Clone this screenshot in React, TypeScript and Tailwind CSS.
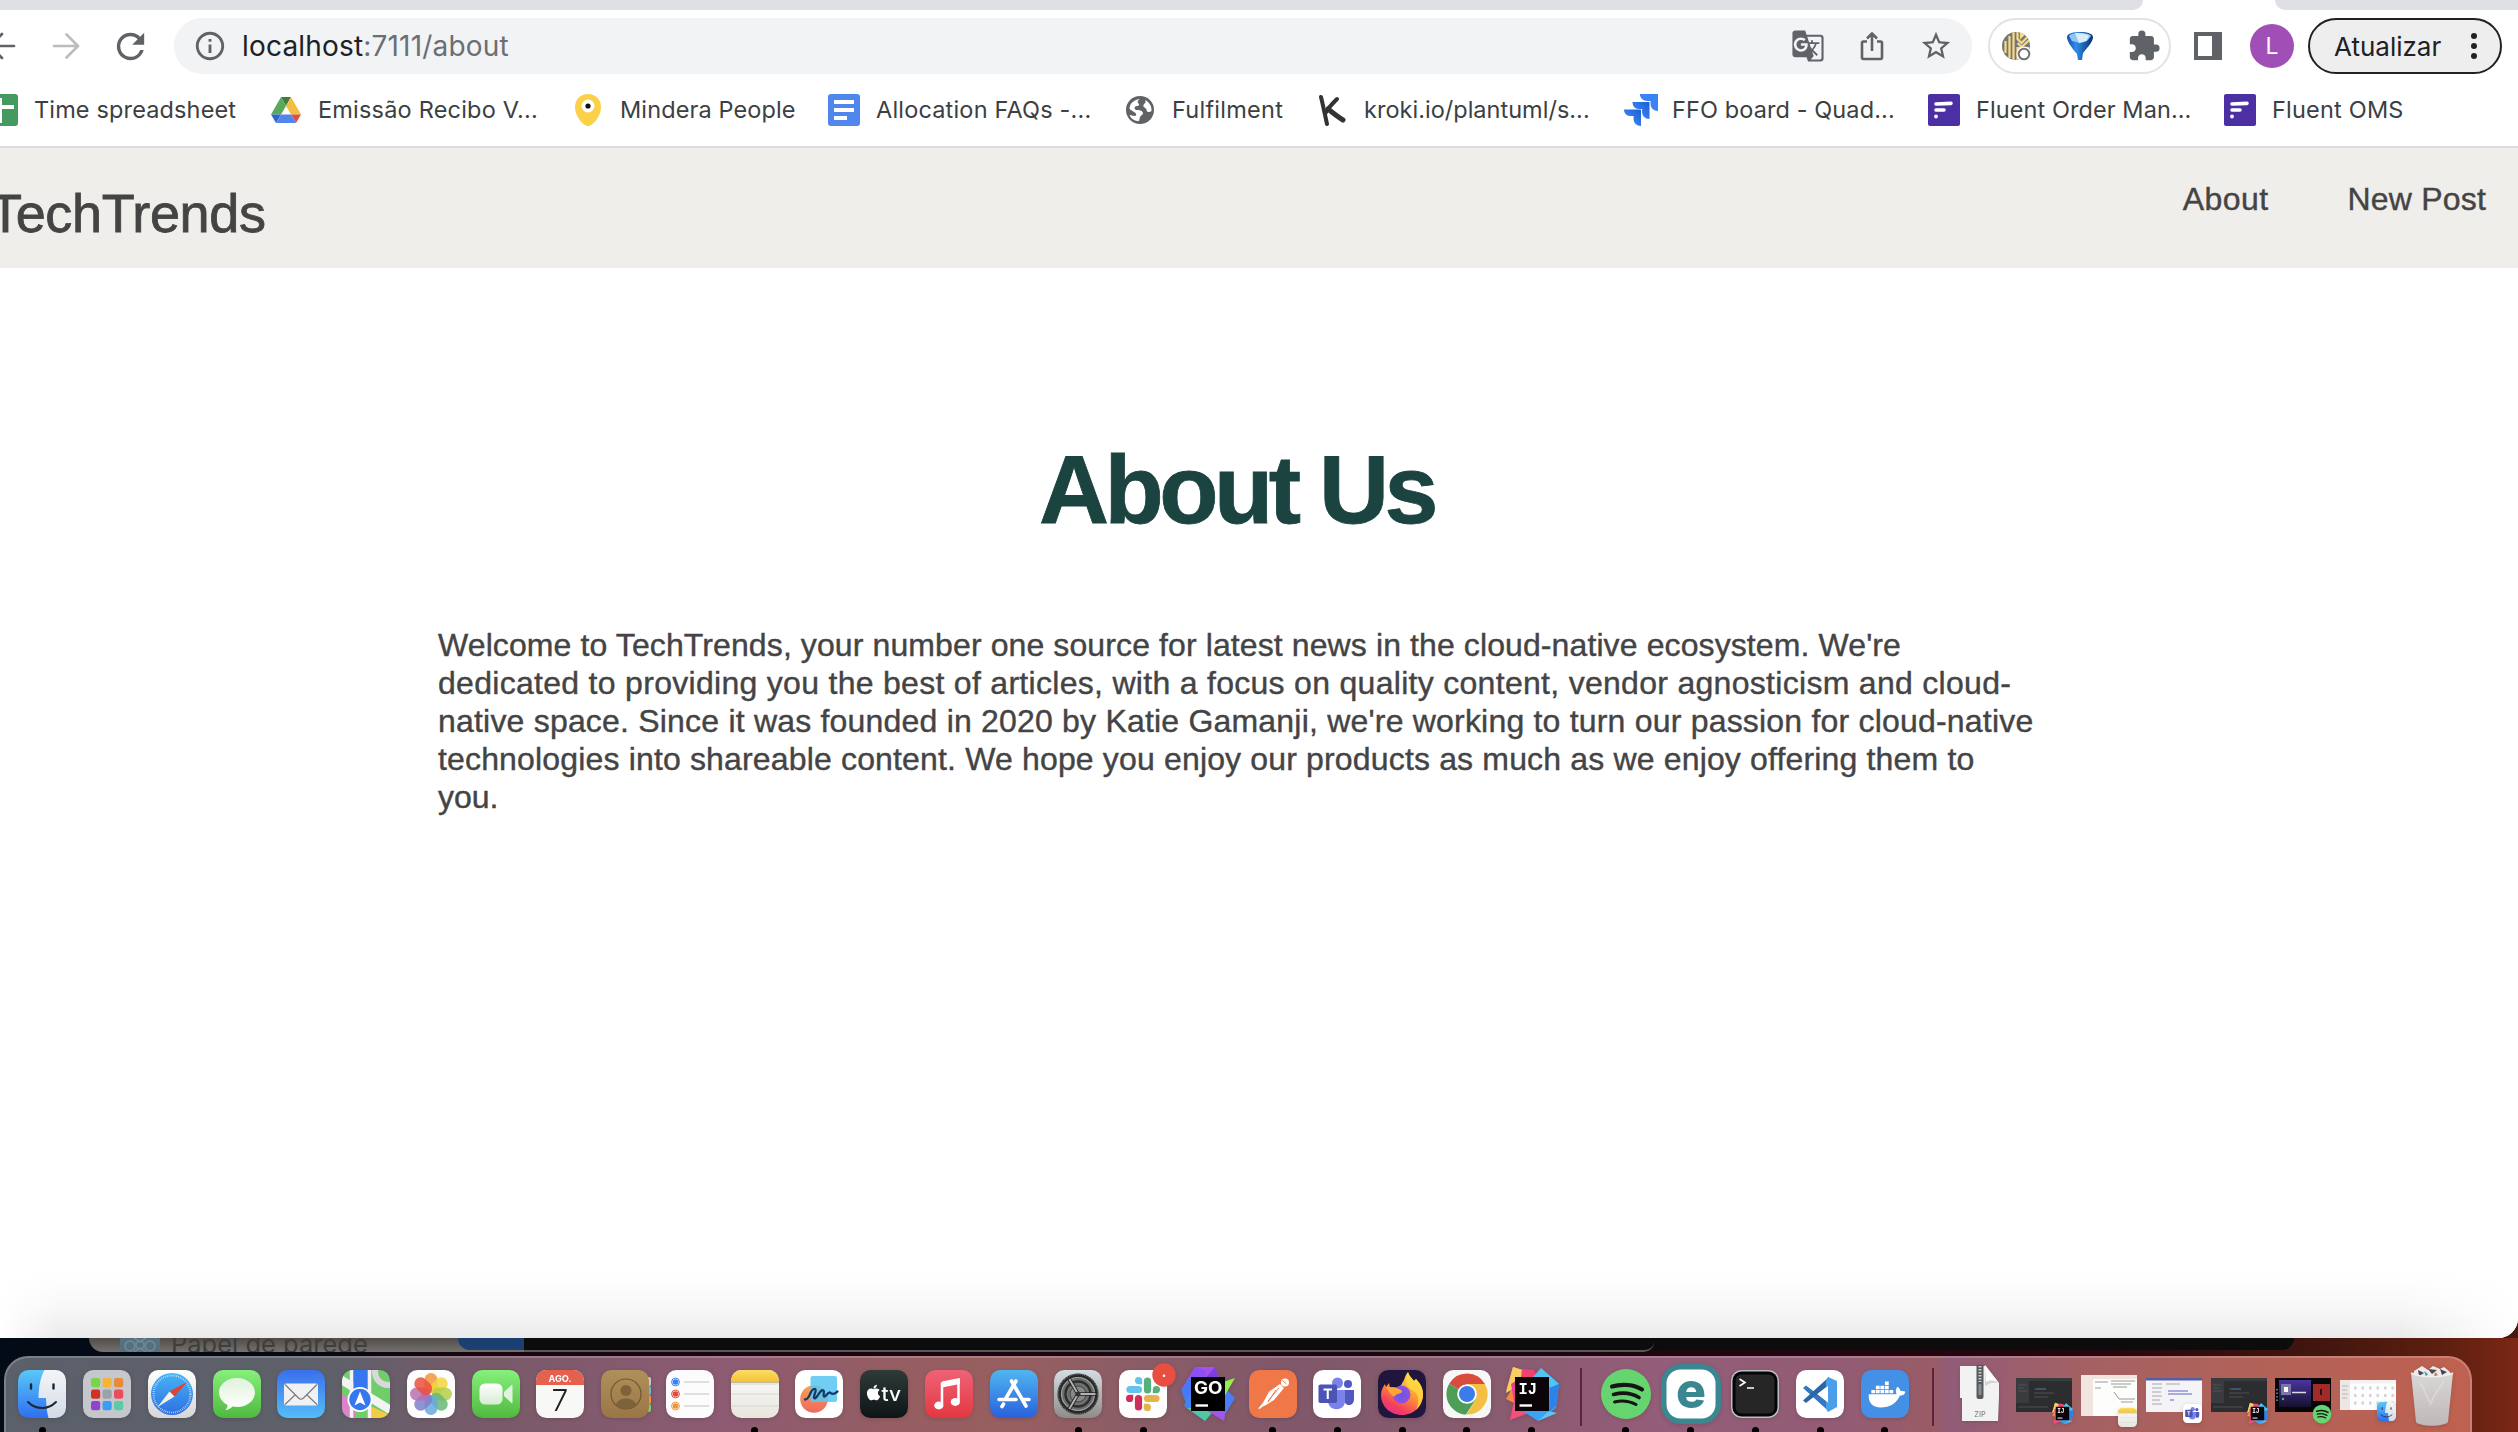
import type { ReactNode } from "react";
import { MdExtension, MdGTranslate, MdInfoOutline, MdRefresh, MdStarBorder } from "react-icons/md";
import { FaApple, FaDocker } from "react-icons/fa";

/* ---------- Toolbar icons ---------- */

const Arrow = ({ className, flip }: { className: string; flip?: boolean }) => (
  <svg viewBox="0 0 28 28" className={className} fill="none" stroke="currentColor" strokeWidth="2.7" strokeLinecap="round">
    <path d={flip ? "M26 14H2M14 2L2 14l12 12" : "M2 14h24M14.500 2.500L26 14 14.500 25.500"} />
  </svg>
);

const Share = () => (
  <svg viewBox="0 0 34 34" className="size-[34px]" fill="none" stroke="#5f6368" strokeWidth="2.6" strokeLinejoin="round">
    <path d="M12 12.500H8.500a1.500 1.500 0 0 0-1.500 1.500v14.500a1.500 1.500 0 0 0 1.500 1.500h17a1.500 1.500 0 0 0 1.500-1.500V14a1.500 1.500 0 0 0-1.500-1.500H22M17 22V5M12 9.500l5-5 5 5" />
  </svg>
);

const Stripes = () => (
  <svg viewBox="0 0 34 34" className="size-[34px]">
    <defs>
      <clipPath id="stripeClip"><circle cx="17" cy="17" r="14" /></clipPath>
    </defs>
    <circle cx="17" cy="17" r="14" fill="#76767a" />
    <g clipPath="url(#stripeClip)" stroke="#f8dc83" strokeWidth="2.200" fill="none">
      <path d="M6.500 12v12M10.500 7v22M14.500 3v28M18.500 2v8l4 4 9-9M18.500 14l4 4 9-8M18.500 31V19h12M22 4v4l6-6" />
    </g>
    <circle cx="25" cy="25" r="7.500" fill="#fff" />
    <circle cx="25" cy="25" r="5.300" fill="#fff" stroke="#707478" strokeWidth="2" />
  </svg>
);

const Funnel = () => (
  <svg viewBox="0 0 34 34" className="size-[34px]">
    <defs>
      <linearGradient id="funnelG" x1="0" x2="1"><stop stopColor="#0f4da6" /><stop offset=".35" stopColor="#2f8deb" /><stop offset="1" stopColor="#082f6b" /></linearGradient>
    </defs>
    <path d="M4 8c0-3 5-5 13-5s13 2 13 5c0 4-4 9-10 16l-1 7h-4l-1-6C8 18 4 12 4 8z" fill="url(#funnelG)" />
    <path d="M6 7c1-2 5-3 11-3s10 1 11 3l-4 5-7 2-8-2z" fill="#8cc5f7" />
    <path d="M12 4l4 10 7-2 3-5c-2-2-7-3-14-3z" fill="#d9edfc" />
  </svg>
);

/* ---------- Bookmark icons ---------- */

const Sheet = () => (
  <svg viewBox="0 0 32 32" className="size-8"><rect width="32" height="32" rx="3" fill="#459b5f" /><path d="M6 13h22M14 4v25" stroke="#fff" strokeWidth="4" /></svg>
);
const Drive = () => (
  <svg viewBox="0 0 32 32" className="size-8">
    <path d="M11 3h10l-5 9z" fill="#3c7d40" />
    <path d="M11 3L1 20.500h10L16 12z" fill="#5aa85c" />
    <path d="M21 3l10 17.500H21L16 12z" fill="#f2bd42" />
    <path d="M1 20.500h10L6 29z" fill="#2f66c9" />
    <path d="M31 20.500H21l5 8.500z" fill="#dc5040" />
    <path d="M11 20.500h10l5 8.500H6z" fill="#5087ec" />
  </svg>
);
const Pin = () => (
  <svg viewBox="0 0 32 32" className="size-8">
    <path d="M16 0c7.500 0 13 5.500 13 13 0 9-8 19-13 19S3 22 3 13C3 5.500 8.500 0 16 0z" fill="#fbd149" />
    <circle cx="16" cy="12" r="6.500" fill="#fff" /><circle cx="16" cy="12" r="2.600" fill="#111" />
  </svg>
);
const Docs = () => (
  <svg viewBox="0 0 32 32" className="size-8"><rect width="32" height="32" rx="3" fill="#5087ec" /><path d="M6 8h20M6 16h20M6 24h13" stroke="#fff" strokeWidth="4" /></svg>
);
const Globe = () => (
  <svg viewBox="0 0 32 32" className="size-8">
    <circle cx="16" cy="16" r="14" fill="#5f6368" />
    <path d="M18 5c-3 0-5 2-4 4 2 1 1 3-1 3-3 0-3 3-1 4 3 0 6 0 7 3 0 2-2 2-3 4l-1 4c-4 0-8-2-9.500-6l5 1c2 0 2-2 1-3l-6-4C5.500 9 11 4.500 18 5z" fill="#fff" />
    <path d="M21 6c4 2 7 6 6.500 11-2 2-5 1-5-1 0-3-4-2-3-5 1-2 3-2 1.500-5z" fill="#fff" />
  </svg>
);
const Kroki = () => (
  <svg viewBox="0 0 32 32" className="size-8" fill="none" stroke="#333" strokeLinecap="round">
    <path d="M5 3c2 8 4 18 6 27" strokeWidth="4" /><path d="M21 5C17 9 12 14 9.500 19" strokeWidth="4" /><path d="M12 15c5 4 10 8 15 11" strokeWidth="5" />
  </svg>
);
const Jira = () => (
  <svg viewBox="0 0 32 32" className="h-8 w-[34px]" preserveAspectRatio="none">
    <defs><linearGradient id="jiraG" x1="1" x2="0" y1="0" y2="1"><stop stopColor="#1b5fd0" /><stop offset=".7" stopColor="#3b82f6" /></linearGradient></defs>
    <path d="M15 0h17v17c-4 0-7-3-7-7V7h-3c-4 0-7-3-7-7z" fill="#3b82f6" />
    <path d="M8 8h16v17c-4 0-7-3-7-7v-3h-3c-4 0-6-3-6-7z" fill="url(#jiraG)" />
    <path d="M0 15.500h16V32c-4 0-7-3-7-7v-3H6c-4 0-6-3-6-6.500z" fill="url(#jiraG)" />
  </svg>
);
const Fluent = () => (
  <svg viewBox="0 0 32 32" className="size-8"><rect width="32" height="32" rx="2" fill="#4c2fa3" /><path d="M8 10l15-.6M8 16h8" stroke="#fff" strokeWidth="3.600" strokeLinecap="round" /><circle cx="8" cy="22.500" r="1.900" fill="#fff" /></svg>
);

/* ---------- Dock icons, each on a 48 unit tile ---------- */

const Tile = ({ children, className = "" }: { children?: ReactNode; className?: string }) => (
  <svg viewBox="0 0 48 48" className={`size-12 overflow-visible drop-shadow-sm ${className}`}>{children}</svg>
);
const Grad = ({ id, a, b }: { id: string; a: string; b: string }) => (
  <defs><linearGradient id={id} x1="0" x2="0" y1="0" y2="1"><stop stopColor={a} /><stop offset="1" stopColor={b} /></linearGradient></defs>
);
const Base = ({ fill }: { fill: string }) => <rect width="48" height="48" rx="10.500" fill={fill} />;

const Finder = ({ className }: { className?: string }) => (
  <Tile className={className}>
    <Grad id="fi1" a="#5ac8f7" b="#2f6ff0" /><Grad id="fi2" a="#f4f5f7" b="#d3dbe8" />
    <Base fill="url(#fi1)" />
    <path d="M26.500 0H37.500A10.500 10.500 0 0 1 48 10.500v27A10.500 10.500 0 0 1 37.500 48H30.500c-1.500-6-2.300-12-2.500-20h-7.500C20.500 17 22.500 7 26.500 0z" fill="url(#fi2)" />
    <path d="M13 14.500v4M35.500 14.500v4" stroke="#1d2733" strokeWidth="2.400" strokeLinecap="round" />
    <path d="M10 32c8 8 20 8 28 0" stroke="#1d2733" strokeWidth="2" fill="none" strokeLinecap="round" />
  </Tile>
);
const PADS = ["#77d648", "#f3b437", "#e98b35", "#cf3125", "#9aa2a6", "#ec4b5a", "#8f43cf", "#3b9cf5", "#5bcba3"];
const Launchpad = () => (
  <Tile><Base fill="#c6c7cc" />{PADS.map((c, i) => <rect key={c} x={8 + (i % 3) * 11.500} y={8 + Math.floor(i / 3) * 11.500} width="9.200" height="9.200" rx="2.300" fill={c} />)}</Tile>
);
const Safari = () => (
  <Tile><Grad id="sa1" a="#fff" b="#d6d6d8" /><Grad id="sa2" a="#45b4f5" b="#2f6fe0" /><Base fill="url(#sa1)" />
    <circle cx="24" cy="24" r="21" fill="url(#sa2)" /><circle cx="24" cy="24" r="18.500" fill="none" stroke="#cfe6fb" strokeWidth="2" strokeDasharray=".7 1.236" />
    <path d="M39 12L21.500 21.500l5 5z" fill="#e5412f" /><path d="M9.500 37l12-15.500 5 5z" fill="#f1f1f1" /></Tile>
);
const Messages = () => (
  <Tile><Grad id="me1" a="#86f07c" b="#4fb93f" /><Grad id="me2" a="#e0f3dc" b="#fff" /><Base fill="url(#me1)" />
    <path d="M24 8c10 0 18 6.300 18 14.500S34 37 24 37c-1.600 0-3.200-.2-4.600-.5C17.500 38.500 15 40 12.500 40c1.400-1.500 2-3 2.100-5C9.500 32.300 6 27.700 6 22.500 6 14.300 14 8 24 8z" fill="url(#me2)" /></Tile>
);
const Mail = () => (
  <Tile><Grad id="ma1" a="#3a6fec" b="#55bdf8" /><Base fill="url(#ma1)" /><rect x="7" y="13.500" width="34" height="22" rx="2" fill="#f1f1f2" />
    <path d="M8 14.500l13.500 13.500c1.500 1.500 3.500 1.500 5 0L40 14.500M8 34.500l10.500-10M40 34.500L29.500 24.500" fill="none" stroke="#77797d" strokeWidth="1.100" /></Tile>
);
const Maps = () => (
  <Tile><defs><clipPath id="mpC"><rect width="48" height="48" rx="10.500" /></clipPath></defs>
    <g clipPath="url(#mpC)"><path fill="#6fce6a" d="M0 0h48v48H0z" /><path d="M0 24l14 10v14H0z" fill="#dd83c8" /><path d="M26 48l2-12 20 9v3z" fill="#f5ca45" />
      <circle cx="46" cy="2" r="13" fill="none" stroke="#d9d9dc" strokeWidth="6" />
      <path d="M-2 9l52 32" stroke="#f3f3f3" strokeWidth="8.500" /><path d="M9.500 0v48M27.500 0v48" stroke="#f3f3f3" strokeWidth="3.500" /><path d="M11.500 0h14v26h-14z" fill="#3577ee" /></g>
    <circle cx="18" cy="29.500" r="12.500" fill="#fff" /><circle cx="18" cy="29.500" r="10.700" fill="#3577ee" /><path d="M18 21.500l5.500 14-5.500-3-5.500 3z" fill="#fff" /></Tile>
);
const PETALS = ["#f2953a", "#f0d63c", "#b5cf49", "#67b878", "#67a9de", "#7d80c9", "#b86fb4", "#e8503c"];
const Photos = () => (
  <Tile><Base fill="#fdfdfd" />{PETALS.map((c, i) => <rect key={c} x="17.500" y="3" width="13" height="20" rx="6.500" fill={c} opacity=".85" transform={`rotate(${i * 45} 24 24)`} />)}</Tile>
);
const FaceTime = () => (
  <Tile><Grad id="ft1" a="#86f07c" b="#4fb93f" /><Grad id="ft2" a="#fff" b="#d5ecd1" /><Base fill="url(#ft1)" /><rect x="7.500" y="13.500" width="23" height="21" rx="5.500" fill="url(#ft2)" /><path d="M32 22l7.500-7q1-.8 1 .5v17q0 1.300-1 .5L32 26z" fill="#e1f2de" /></Tile>
);
const Calendar = () => (
  <Tile><Base fill="#f8f8f6" /><path d="M0 15v-4.500A10.500 10.500 0 0 1 10.500 0h27A10.500 10.500 0 0 1 48 10.500V15z" fill="#e4604f" />
    <text x="24" y="11.800" textAnchor="middle" fontSize="9.200" fontWeight="700" fill="#fff" fontFamily="Inter, sans-serif">AGO.</text>
    <text x="24" y="41" textAnchor="middle" fontSize="30" fontWeight="300" fill="#222" fontFamily="Inter, sans-serif">7</text></Tile>
);
const Contacts = () => (
  <Tile><Grad id="co1" a="#b0905a" b="#9b7645" /><rect x="40" y="7" width="10" height="9" rx="2" fill="#c9c9c9" /><rect x="40" y="16" width="10" height="9" rx="2" fill="#6bb7e3" /><rect x="40" y="25" width="10" height="9" rx="2" fill="#e79637" /><rect x="40" y="34" width="10" height="8" rx="2" fill="#77cf69" />
    <Base fill="url(#co1)" /><circle cx="25" cy="24" r="15" fill="none" stroke="#6f5634" strokeWidth="1.200" /><circle cx="25" cy="20.500" r="5.500" fill="#7d623b" /><path d="M14.500 34.500C17 30 21 28.500 25 28.500s8 1.500 10.500 6C33 37.500 29 39 25 39s-8-1.500-10.500-4.500z" fill="#7d623b" /></Tile>
);
const Reminders = () => (
  <Tile><Base fill="#fcfcfc" />{["#3a7ef3", "#e2493a", "#eb9638"].map((c, i) => (
    <g key={c}><circle cx="9.500" cy={12 + i * 12} r="3.900" fill="#fff" stroke={c} strokeWidth="1" /><circle cx="9.500" cy={12 + i * 12} r="2.800" fill={c} /><path d={`M18 ${12 + i * 12}h25`} stroke="#cfcfcf" strokeWidth="1.300" /></g>
  ))}</Tile>
);
const Notes = ({ className }: { className?: string }) => (
  <Tile className={className}><Grad id="no1" a="#fdfdfc" b="#e7e5dd" /><Grad id="no2" a="#fbdc62" b="#f5c334" /><Base fill="url(#no1)" /><path d="M0 12v-1.500A10.500 10.500 0 0 1 10.500 0h27A10.500 10.500 0 0 1 48 10.500V12z" fill="url(#no2)" /><path d="M0 12.700h48" stroke="#b5aa84" strokeWidth="1" /><path d="M1 14.500h46" stroke="#c9c9c5" strokeWidth=".8" strokeDasharray=".8 .8" /><path d="M0 24h48M0 36h48" stroke="#d3d2cc" strokeWidth=".8" /></Tile>
);
const Freeform = () => (
  <Tile><Grad id="fr1" a="#f7a34f" b="#ee6862" /><Base fill="#fff" /><circle cx="19" cy="29" r="13.800" fill="url(#fr1)" /><rect x="15.500" y="6" width="26.500" height="26" rx="2" fill="#5cc6f2" opacity=".88" />
    <path d="M10 29.500c3 0 4-3 5.500-6.500s4-5 5-3.500-1.500 5-1.500 7.500 2 1.500 4-2 4-5.500 5.500-4.500-1 5 .5 6 3.500-4 5.500-4 2 4 8-1" fill="none" stroke="#123c66" strokeWidth="2.300" strokeLinecap="round" /></Tile>
);
const AppleTv = () => (
  <Tile><Grad id="tv1" a="#2f3b38" b="#0d1416" /><Base fill="url(#tv1)" /><FaApple x="4.500" y="13.500" size={18} color="#fff" />
    <text x="21.500" y="31" fontSize="20" fontWeight="500" fill="#fff" fontFamily="Inter, sans-serif" textLength="19.500" lengthAdjust="spacingAndGlyphs">tv</text></Tile>
);
const Music = () => (
  <Tile><Grad id="mu1" a="#ee6377" b="#e5373f" /><Base fill="url(#mu1)" /><path d="M17 34.500V13.500L33.500 10v21" fill="none" stroke="#fff" strokeWidth="2.500" /><path d="M17 11.500L34.700 8v6L17 17.500z" fill="#fff" /><ellipse cx="13.800" cy="35.500" rx="4.600" ry="3.900" fill="#fff" /><ellipse cx="30.300" cy="32" rx="4.600" ry="3.900" fill="#fff" /></Tile>
);
const AppStore = () => (
  <Tile><Grad id="as1" a="#4fb6f0" b="#2a60dc" /><Base fill="url(#as1)" /><g stroke="#fff" strokeWidth="3.600" strokeLinecap="round"><path d="M26 11L15.500 29M21.500 11L36 36M9 29.500h17M33.500 29.500H39M13.500 34l-1.500 2.500" /></g></Tile>
);
const Settings = () => (
  <Tile><Grad id="se1" a="#d5dde2" b="#8e8c89" /><Base fill="url(#se1)" /><circle cx="24" cy="24" r="20.500" fill="#262727" /><circle cx="24" cy="24" r="20" fill="none" stroke="#777" strokeWidth="1.500" strokeDasharray="1 1" /><circle cx="24" cy="24" r="16.500" fill="#6b6c6c" stroke="#a0a1a1" strokeWidth="1.200" /><circle cx="24" cy="24" r="12.500" fill="#6f7070" stroke="#2d2e2e" strokeWidth="2.400" /><circle cx="24" cy="24" r="8" fill="#888" stroke="#444" />
    <path d="M24 24h18M24 24L15 8.500M24 24l-9 15.500" stroke="#222" strokeWidth="3.600" /><path d="M24 24h17.500M24 24L15.300 9M24 24l-8.700 15" stroke="#b2b4b4" strokeWidth="1.900" /><circle cx="24" cy="24" r="2.500" fill="#333" /></Tile>
);
const Slack = () => (
  <Tile><Base fill="#fdfdfd" />
    <g strokeWidth="7.200" strokeLinecap="round"><path d="M11 19.500h8.500" stroke="#64c3ec" /><path d="M28.500 11v9" stroke="#56b07e" /><path d="M37 28.500h-8.500" stroke="#e6b24b" /><path d="M19.500 37v-8.500" stroke="#cd2e5b" /></g>
    <path d="M16 10.600a3.600 3.600 0 0 1 7.200 0v3.600h-3.600a3.600 3.600 0 0 1-3.600-3.600z" fill="#64c3ec" /><path d="M37.400 16a3.600 3.600 0 0 1 0 7.200h-3.600v-3.600a3.600 3.600 0 0 1 3.600-3.600z" fill="#56b07e" /><path d="M32 37.400a3.600 3.600 0 0 1-7.200 0v-3.600h3.600a3.600 3.600 0 0 1 3.600 3.600z" fill="#e6b24b" /><path d="M10.600 32a3.600 3.600 0 0 1 0-7.200h3.600v3.600a3.600 3.600 0 0 1-3.600 3.600z" fill="#cd2e5b" />
    <circle cx="45" cy="5" r="11.700" fill="#e84f40" /><circle cx="45" cy="5.800" r="1.300" fill="#fff" /></Tile>
);
const GoLand = () => (
  <Tile>
    <path d="M11 -3h20l4 11L29 27 -2 18z" fill="#a94ff0" /><path d="M7 5l4-8 10 3 3 20-26-2z" fill="#8b4ff5" /><path d="M-3 20L6 7l12 20-14 12z" fill="#4579f5" /><path d="M0 36l5-12 20 6-4 21z" fill="#3f86f2" /><path d="M3 38l18 13 12-14z" fill="#4fc7a4" /><path d="M22 40h20l-2 11z" fill="#a254f0" /><path d="M34 12l17 16-9 15-14-8z" fill="#4a7ef5" /><path d="M30 15L51 8 40 27z" fill="#8ff04e" /><path d="M31 -3l4 12-16 2z" fill="#7c3fe0" />
    <rect x="7" y="7" width="34" height="34" fill="#000" /><text x="10" y="23.500" fontSize="17.500" fontWeight="700" fill="#fff" fontFamily="Inter, sans-serif" textLength="28.500" lengthAdjust="spacingAndGlyphs">GO</text><path d="M11.500 35.500H24" stroke="#fff" strokeWidth="2.400" /></Tile>
);
const Postman = () => (
  <Tile><Base fill="#ef7748" /><circle cx="36" cy="12.500" r="4" fill="#fff" /><path d="M31 14l4 4-10 12-8 5-4 2-2 1.800H9l5-6 6-11z" fill="#fff" /><path d="M30 18L19 31M33.500 10.500l4 3.500M27 20l-8 12" stroke="#ef7748" strokeWidth="1" /></Tile>
);
const Teams = ({ className }: { className?: string }) => (
  <Tile className={className}><Base fill="#fff" /><circle cx="35" cy="14" r="4" fill="#5059c0" /><path d="M31 20h10v9c0 8-10 8-10 0z" fill="#5059c0" /><circle cx="24.500" cy="13" r="5.500" fill="#7b83eb" /><path d="M15 20h17v11c0 11-17 11-17 0z" fill="#7b83eb" /><rect x="5.500" y="14.500" width="18.500" height="18.500" rx="1.800" fill="#4b53b5" />
    <path d="M10.500 19.500h8.500M14.750 19.500V29" stroke="#fff" strokeWidth="2.100" /></Tile>
);
const Firefox = () => (
  <Tile><defs>
    <linearGradient id="ff1" x1=".8" x2=".25" y1="0" y2="1"><stop stopColor="#ffe64d" /><stop offset=".45" stopColor="#ff9a32" /><stop offset=".8" stopColor="#f4405e" /><stop offset="1" stopColor="#e22f8b" /></linearGradient>
    <radialGradient id="ff2"><stop stopColor="#6a55e8" /><stop offset="1" stopColor="#9151e0" /></radialGradient></defs>
    <Base fill="#20153c" />
    <path d="M30 2c1 4 4 6 6 9l2-2c5 5 7 10 7 15 0 12-9 21-21 21S3 36 3 25c0-5 2-8 4-11l1 3 3-4 1 5c2-1 5-1 8 0 3-2 4-5 6-8 1-3 2-6 4-8z" fill="url(#ff1)" />
    <path d="M36 11l2-2c5 5 7 10 7 15 0 7-3 12-7 16 3-7 3-13 0-17-3-3-9-5-10-9 0-5 1-9 2-12 1 4 4 6 6 9z" fill="#ffd93f" opacity=".8" />
    <circle cx="23.500" cy="24.500" r="9" fill="url(#ff2)" /><path d="M8 17c5 0 8 0 13 2 3 1 4 3 2 4-3 1-5 1-7 4-3-3-6-6-8-10z" fill="#ffa436" /></Tile>
);
const Chrome = () => (
  <Tile><Base fill="#f7f7f7" /><path d="M24 24L6.200 13.700A20.600 20.600 0 0 1 42 14H24z" fill="#d84b3d" /><path d="M24 24L6.200 13.700A20.600 20.600 0 0 0 23 44.600L33 29z" fill="#4d9f58" /><path d="M24 24l9 5-9.500 15.600A20.600 20.600 0 0 0 42 14H24z" fill="#f4bf43" /><circle cx="24" cy="24" r="9.800" fill="#fff" /><circle cx="24" cy="24" r="8" fill="#3c7bea" /></Tile>
);
const IntelliJ = ({ className }: { className?: string }) => (
  <Tile className={className}>
    <path d="M5 -3l14 4 6 12-27 8z" fill="#f5a66f" /><path d="M5 -3l11 4-4 14-14 8z" fill="#f6cf62" /><path d="M14 -1l12 1 6 14-20 2z" fill="#f0426f" /><path d="M-2 29l8-14 10 14-10 4z" fill="#f58a3c" /><path d="M3 14l9-6v36L2 50l4-18z" fill="#ee3e8e" /><path d="M2 50l4-18 20 9z" fill="#f24f7c" /><path d="M33 -2l18 16-3 24-18 13-14-9z" fill="#3ba2f5" /><path d="M33 -2l-8 9 18 10 8-3z" fill="#4fc6f2" /><path d="M41 41l8 2-19 8z" fill="#5bc8f5" /><path d="M42 18l9-4-3 22-7 6z" fill="#2d82ea" />
    <rect x="7" y="7" width="34" height="34" fill="#0c0508" /><text x="10.500" y="23.500" fontSize="17" fontWeight="700" fill="#fff" fontFamily="'Liberation Mono', monospace" textLength="18.500" lengthAdjust="spacingAndGlyphs">IJ</text><path d="M11.500 35.500H24" stroke="#fff" strokeWidth="2.400" /></Tile>
);
const Spotify = ({ className }: { className?: string }) => (
  <Tile className={className}><circle cx="24" cy="24" r="25" fill="#67d56f" /><g fill="none" stroke="#151515" strokeLinecap="round"><path d="M10 16.500c10-3 22-2 30 3" strokeWidth="4.200" /><path d="M11.500 24.500c9-2.500 18-1.500 25.500 3" strokeWidth="3.600" /><path d="M12.500 32c8-2 15-1 21.500 2.500" strokeWidth="3" /></g></Tile>
);
const EIcon = () => (
  <Tile><rect x="-6" y="-6" width="60" height="60" rx="20" fill="#3a8791" /><rect x="-.5" y="-.5" width="49" height="49" rx="14" fill="#fff" /><text x="24" y="38" textAnchor="middle" fontSize="50" fontWeight="800" fill="#3a8791" fontFamily="Inter, sans-serif">e</text></Tile>
);
const Terminal = () => (
  <Tile><rect width="48" height="48" rx="10.500" fill="#b9c0c5" /><rect x="1.500" y="1.500" width="45" height="45" rx="9" fill="#050505" /><rect x="4.500" y="4.500" width="39" height="39" rx="6" fill="#262626" /><path d="M8.500 9l5.500 3.500L8.500 16M16 18h7" stroke="#fff" strokeWidth="1.600" fill="none" /></Tile>
);
const VsCode = () => (
  <Tile><Base fill="#fff" /><path d="M7 18l3-2.500L33 33v8.500z" fill="#3478c0" /><path d="M7 30.500L10 33l23-18V7z" fill="#2a66a8" /><path d="M32 7l9 4v26l-9 5-2-3V10z" fill="#4a9fea" /><path d="M32 16v16.500L21.500 24z" fill="#fff" /></Tile>
);
const Docker = () => (
  <Tile><Base fill="#4390e6" /><FaDocker x="7.500" y="6" size={37} color="#fff" /></Tile>
);

const Zip = () => (
  <svg viewBox="0 0 42 58" className="h-[58px] w-[42px] drop-shadow">
    <path d="M1 2h25l14 17v14l-1 24H3V34H1z" fill="#f2f2f2" /><path d="M26 1l14 18c-5-1-10 0-14 3z" fill="#d5d5d5" /><path d="M26 1l13 17c-5-2-9-2-12 0z" fill="#fbfbfb" />
    <path d="M17.500 1h7v32q0 2-2 2h-3q-2 0-2-2z" fill="#55595c" /><path d="M21 2v16" stroke="#ccc" strokeWidth="3" strokeDasharray="1.500 1.500" /><rect x="19.500" y="20" width="3" height="11" rx="1" fill="#888c90" />
    <text x="21" y="52.500" textAnchor="middle" fontSize="7.500" fill="#777" fontFamily="Inter, sans-serif">ZIP</text>
  </svg>
);
const Trash = () => (
  <svg viewBox="0 0 44 62" className="h-[62px] w-11 drop-shadow">
    <Grad id="tr1" a="#d9d6d5" b="#bcb9b8" />
    <path d="M4 6l8-5 6 4 5-4 7 3 4-2 6 5 1 7H3z" fill="#eceaea" /><path d="M8 5l6 3-5 3zM18 4l4 5 5-4zM30 4l2 6 5-3z" fill="#454a50" /><path d="M14 6l4 3-2 3z" fill="#4e9fb8" /><path d="M25 7l3 3-4 2z" fill="#cf7751" />
    <path d="M1 8c10 5 32 5 42 0l-5 49c-4 5-28 5-32 0z" fill="url(#tr1)" /><path d="M1 8c10 5 32 5 42 0" fill="none" stroke="#efeded" strokeWidth="1.400" /><path d="M10 18c6 6 5 14 11 20M34 16c-4 8-9 10-14 24" stroke="#e6e4e4" strokeWidth="2" fill="none" opacity=".5" />
  </svg>
);

/* ---------- Minimised windows ---------- */

const Editor = () => (
  <svg viewBox="0 0 56 34" className="h-[34px] w-14"><path fill="#2b2d2f" d="M0 0h56v34H0z" /><path fill="#393c3e" d="M0 0h56v3H0zM0 3h13v22H0z" /><path d="M2 7h8M2 10h6M2 13h9M18 11h12M18 15h20M18 19h14M2 29h30" stroke="#55595c" strokeWidth=".8" /><path d="M20 11h10" stroke="#4573b0" strokeWidth=".8" /></svg>
);
const NotesWin = () => (
  <svg viewBox="0 0 56 41" className="h-[41px] w-14"><path fill="#fdfdfc" d="M0 0h56v41H0z" /><path fill="#f0e6df" d="M0 0h56v4H0zM0 4h12v37H0z" /><path d="M14 7h13M30 6h24M30 9h20M14 13h6M32 12h14M33 17l5 7M38 24h16M40 27h12" stroke="#999" strokeWidth="1" /></svg>
);
const TeamsWin = () => (
  <svg viewBox="0 0 56 34" className="h-[34px] w-14"><path fill="#f4f4f7" d="M0 0h56v34H0z" /><path fill="#555ca8" d="M0 0h56v2.500H0z" /><path d="M6 6h10M6 10h10M6 14h9M6 18h10M6 22h8M6 26h10M20 6h14" stroke="#a5a5ae" strokeWidth="1.200" /><path d="M22 13h20M22 16h24M24 22h4" stroke="#8d93d8" strokeWidth="1.500" /></svg>
);
const SpotifyWin = () => (
  <svg viewBox="0 0 56 34" className="h-[34px] w-14"><Grad id="sw" a="#4b35a0" b="#15112c" /><path fill="#070707" d="M0 0h56v34H0z" /><path fill="url(#sw)" d="M4 2h32v27H4z" /><path fill="#a12b2b" d="M38 6h17v17H38z" /><rect x="6" y="6" width="10" height="11" fill="#7d74a8" /><rect x="9" y="9" width="4" height="5" fill="#fff" /><path d="M17 14.500h14" stroke="#ddd" strokeWidth="1.500" /><circle cx="8" cy="21" r="1.200" fill="#3fc860" /><path d="M2 11v12" stroke="#57a0c0" strokeWidth="1.500" strokeDasharray="1.500 2" /><path d="M46 11v6" stroke="#33100f" strokeWidth="2" /></svg>
);
const FinderWin = () => (
  <svg viewBox="0 0 56 30" className="h-[30px] w-14"><path fill="#fdfdfd" d="M0 0h56v30H0z" /><path fill="#ece6e4" d="M0 0h10v30H0z" /><path fill="#f4f1f0" d="M10 0h46v3.500H10z" /><path d="M14 8h40M14 15.500h40M14 23h40" stroke="#d4d4d6" strokeWidth="3" strokeDasharray="2.500 5" /><path d="M2 6h6M2 10h5M2 14h6M2 18h5" stroke="#aaa" strokeWidth=".8" /></svg>
);

const APPS: [ReactNode, boolean][] = [
  [<Finder />, true], [<Launchpad />, false], [<Safari />, false], [<Messages />, false], [<Mail />, false], [<Maps />, false],
  [<Photos />, false], [<FaceTime />, false], [<Calendar />, false], [<Contacts />, false], [<Reminders />, false], [<Notes />, true],
  [<Freeform />, false], [<AppleTv />, false], [<Music />, false], [<AppStore />, false], [<Settings />, true], [<Slack />, true],
  [<GoLand />, false], [<Postman />, true], [<Teams />, true], [<Firefox />, true], [<Chrome />, true], [<IntelliJ />, true],
];
const RECENT: ReactNode[] = [<Spotify />, <EIcon />, <Terminal />, <VsCode />, <Docker />];
const WINDOWS: [ReactNode, ReactNode][] = [
  [<Editor />, <IntelliJ className="!size-[19px]" />],
  [<NotesWin />, <Notes className="!size-[19px]" />],
  [<TeamsWin />, <Teams className="!size-[19px]" />],
  [<Editor />, <IntelliJ className="!size-[19px]" />],
  [<SpotifyWin />, <Spotify className="!size-[18px]" />],
  [<FinderWin />, <Finder className="!size-[19px]" />],
];

const DockCell = ({ children, running }: { children: ReactNode; running?: boolean }) => (
  <div className="flex w-[64.760px] shrink-0 flex-col items-center pt-3">
    {children}
    {running && <span className="mt-[9px] size-[7px] rounded-full bg-black" />}
  </div>
);

const BOOKMARKS: [ReactNode, string, string, string][] = [
  [<Sheet />, "Time spreadsheet", "w-[284px]", "tracking-[0.14px]"],
  [<Drive />, "Emissão Recibo V...", "w-[302px]", "tracking-[0.2px]"],
  [<Pin />, "Mindera People", "w-[256px]", "tracking-[0.12px]"],
  [<Docs />, "Allocation FAQs -...", "w-[296px]", "tracking-[0.18px]"],
  [<Globe />, "Fulfilment", "w-[192px]", "tracking-[0.25px]"],
  [<Kroki />, "kroki.io/plantuml/s...", "w-[308px]", "tracking-[0.02px]"],
  [<Jira />, "FFO board - Quad...", "w-[304px]", "tracking-[0.1px]"],
  [<Fluent />, "Fluent Order Man...", "w-[296px]", "tracking-[0.08px]"],
  [<Fluent />, "Fluent OMS", "w-[230px]", "tracking-[0.2px]"],
];

function Browser() {
  return (
    <div className="flex h-[1338px] flex-col overflow-hidden rounded-br-[20px] bg-white">
      <div className="flex h-[10px] shrink-0 justify-between">
        <div className="w-[2143px] rounded-br-[10px] bg-[#dee0e4]" />
        <div className="w-[243px] rounded-bl-[10px] bg-[#dee0e4]" />
      </div>
      <div className="mt-2 flex h-14 shrink-0 items-center font-[Inter,sans-serif]">
        <Arrow flip className="-ml-3 size-7 shrink-0 text-[#5f6368]" />
        <Arrow className="ml-9 size-7 shrink-0 text-[#babcbe]" />
        <MdRefresh className="ml-[30px] size-[41px] shrink-0 text-[#5f6368]" />
        <div className="ml-[23px] flex h-14 w-[1798px] shrink-0 items-center rounded-full bg-[#f1f3f5] pr-[19px] pl-[19px]">
          <MdInfoOutline className="size-[34px] text-[#5f6368]" />
          <span className="ml-[15px] flex-1 text-[28px] tracking-[0.180px] text-[#6b6e72]"><span className="text-[#202124]">localhost</span>:7111/about</span>
          <div className="flex gap-[30px]">
            <MdGTranslate className="size-[34px] text-[#5f6368]" />
            <Share />
            <MdStarBorder className="size-[34px] text-[#5f6368]" />
          </div>
        </div>
        <div className="ml-4 flex h-14 w-[183px] shrink-0 items-center gap-[30px] rounded-full border-2 border-[#e3e3e4] pl-[9px]">
          <Stripes />
          <Funnel />
          <MdExtension className="size-[34px] shrink-0 text-[#5f6368]" />
        </div>
        <div className="ml-[23px] size-7 shrink-0 border-4 border-r-[10px] border-[#5f6368]" />
        <div className="ml-7 flex size-11 shrink-0 items-center justify-center rounded-full bg-[#9f4fb5] text-[23px] text-white">L</div>
        <div className="ml-[14px] flex h-14 w-[194px] shrink-0 items-center rounded-full border-2 border-[#202124] bg-[#eeeeef] pl-[24px]">
          <span className="w-[107px] whitespace-nowrap pt-px text-[26px] text-[#202124]">Atualizar</span>
          <div className="ml-[30px] flex flex-col gap-1">
            <i className="size-1.5 rounded-full bg-[#202124]" />
            <i className="size-1.5 rounded-full bg-[#202124]" />
            <i className="size-1.5 rounded-full bg-[#202124]" />
          </div>
        </div>
      </div>
      <div className="flex h-[74px] shrink-0 items-center border-b-2 border-[#dadce0] font-[Inter,sans-serif] text-[23.500px] text-[#3c4043]">
        <div className="-ml-[14px] flex">
          {BOOKMARKS.map(([icon, label, width, tracking], i) => (
            <div key={i} className={`flex shrink-0 items-center gap-4 ${width}`}>
              <span className="w-8 shrink-0">{icon}</span>
              <span className={`whitespace-nowrap ${tracking}`}>{label}</span>
            </div>
          ))}
        </div>
      </div>
      <div className="flex h-[120px] shrink-0 items-start justify-between bg-[#efeeea] font-['Liberation_Sans',sans-serif] text-[#444] [-webkit-text-stroke:0.4px_#444]">
        <span className="-ml-[11px] pt-[38px] text-[54px] leading-none tracking-[-0.350px] [-webkit-text-stroke:0.8px_#444]">TechTrends</span>
        <nav className="flex gap-[79px] pt-[35px] pr-8 text-[32px] leading-none">
          <span className="tracking-[0.400px]">About</span>
          <span className="tracking-[0.200px]">New Post</span>
        </nav>
      </div>
      <main className="flex flex-1 flex-col bg-[linear-gradient(to_right,#fff_0px,transparent_60px,transparent_2400px,#fff_2518px),linear-gradient(to_bottom,#fff_94%,#f8f8f8_97%,#eaeaea_100%)] font-['Liberation_Sans',sans-serif]">
        <h1 className="mt-[173px] ml-[1039px] text-[97px] leading-none font-bold tracking-[-4.500px] text-[#1b4340] [-webkit-text-stroke:0.8px_#1b4340]">About Us</h1>
        <p className="mt-[88px] ml-[438px] flex flex-col text-[32px] leading-[38px] whitespace-nowrap text-[#444] [-webkit-text-stroke:0.4px_#444]">
          <span className="tracking-[0.105px]">Welcome to TechTrends, your number one source for latest news in the cloud-native ecosystem. We're</span>
          <span className="tracking-[0.295px]">dedicated to providing you the best of articles, with a focus on quality content, vendor agnosticism and cloud-</span>
          <span className="tracking-[0.200px]">native space. Since it was founded in 2020 by Katie Gamanji, we're working to turn our passion for cloud-native</span>
          <span className="tracking-[0.160px]">technologies into shareable content. We hope you enjoy our products as much as we enjoy offering them to</span>
          <span>you.</span>
        </p>
      </main>
    </div>
  );
}

function BackWindows() {
  return (
    <div className="flex h-[18px] items-start">
      <div className="ml-[89px] flex h-[14px] w-[435px] items-end overflow-hidden rounded-bl-[16px] bg-[linear-gradient(#4f4c4a,#75716d)]">
        <svg viewBox="0 0 40 14" className="ml-[31px] h-[14px] w-10 shrink-0"><path fill="#56717d" d="M0 0h40v14H0z" /><g fill="none" stroke="#6f8b97" strokeWidth="1.500"><circle cx="20" cy="7" r="4" /><circle cx="10" cy="8" r="5" /><circle cx="30" cy="8" r="5" /><path d="M14 0l6 4 6-4M14 14l6-4 6 4" /></g></svg>
        <span className="ml-[11px] h-[28px] font-[Inter,sans-serif] text-[25.500px] leading-[39px] whitespace-nowrap text-[#403d3b]">Papel de parede</span>
        <span className="ml-auto h-3 w-[66px] shrink-0 self-start rounded-bl-[12px] bg-[#1b3f70]" />
      </div>
      <div className="h-[14px] w-[1130px] rounded-br-[10px] border-b-2 border-[#5a5857] bg-[#0c0c0c]" />
      <div className="h-[12px] w-[640px] rounded-br-[12px] bg-[#0c0c0c]" />
    </div>
  );
}

export default function App() {
  return (
    <div className="h-[1432px] w-[2518px] overflow-hidden bg-[linear-gradient(to_right,#030b16_0px,#040a14_300px,#1a0510_480px,#1c0610_1500px,#26060f_2100px,#43170e_2330px,#5c1e10_2440px,#7c2715_2518px)]">
      <div className="bg-[linear-gradient(to_right,#030b16_0px,#0c0c0c_300px,#0c0c0c_2200px,#471a10_2518px)]">
        <Browser />
      </div>
      <BackWindows />
      <div className="ml-1 flex h-[100px] w-[2468px] items-start rounded-[24px] border-2 border-white/20 bg-[linear-gradient(to_right,#5c606a_0px,#5f606a_330px,#785a69_480px,#8d5b72_720px,#965e62_900px,#985f60_1010px,#8c5d66_1110px,#80586a_1290px,#865b6d_1450px,#945d79_1660px,#935c74_1840px,#9a5c66_1930px,#915c78_1945px,#a36064_2070px,#b06259_2230px,#bf6150_2468px)] bg-origin-border pl-[4px]">
        {APPS.map(([icon, running], i) => <DockCell key={i} running={running}>{icon}</DockCell>)}
        <div className="mt-[10px] ml-[16px] h-[58px] w-[1.500px] shrink-0 bg-[#5a2440]" />
        <div className="ml-[12px] flex shrink-0">
          {RECENT.map((icon, i) => <DockCell key={i} running>{icon}</DockCell>)}
        </div>
        <div className="mt-[10px] ml-[15px] h-[58px] w-[1.500px] shrink-0 bg-[#5a2440]" />
        <div className="ml-[25px] flex h-[64px] shrink-0 items-end"><Zip /></div>
        <div className="ml-[11px] flex shrink-0">
          {WINDOWS.map(([win, badge], i) => (
            <div key={i} className="flex h-[74px] w-[64.800px] shrink-0 items-center justify-center">
              <div className="relative">
                {win}
                <div className="absolute right-0 -bottom-[11px]">{badge}</div>
              </div>
            </div>
          ))}
        </div>
        <div className="mt-[7px] ml-[9px] shrink-0"><Trash /></div>
      </div>
    </div>
  );
}
